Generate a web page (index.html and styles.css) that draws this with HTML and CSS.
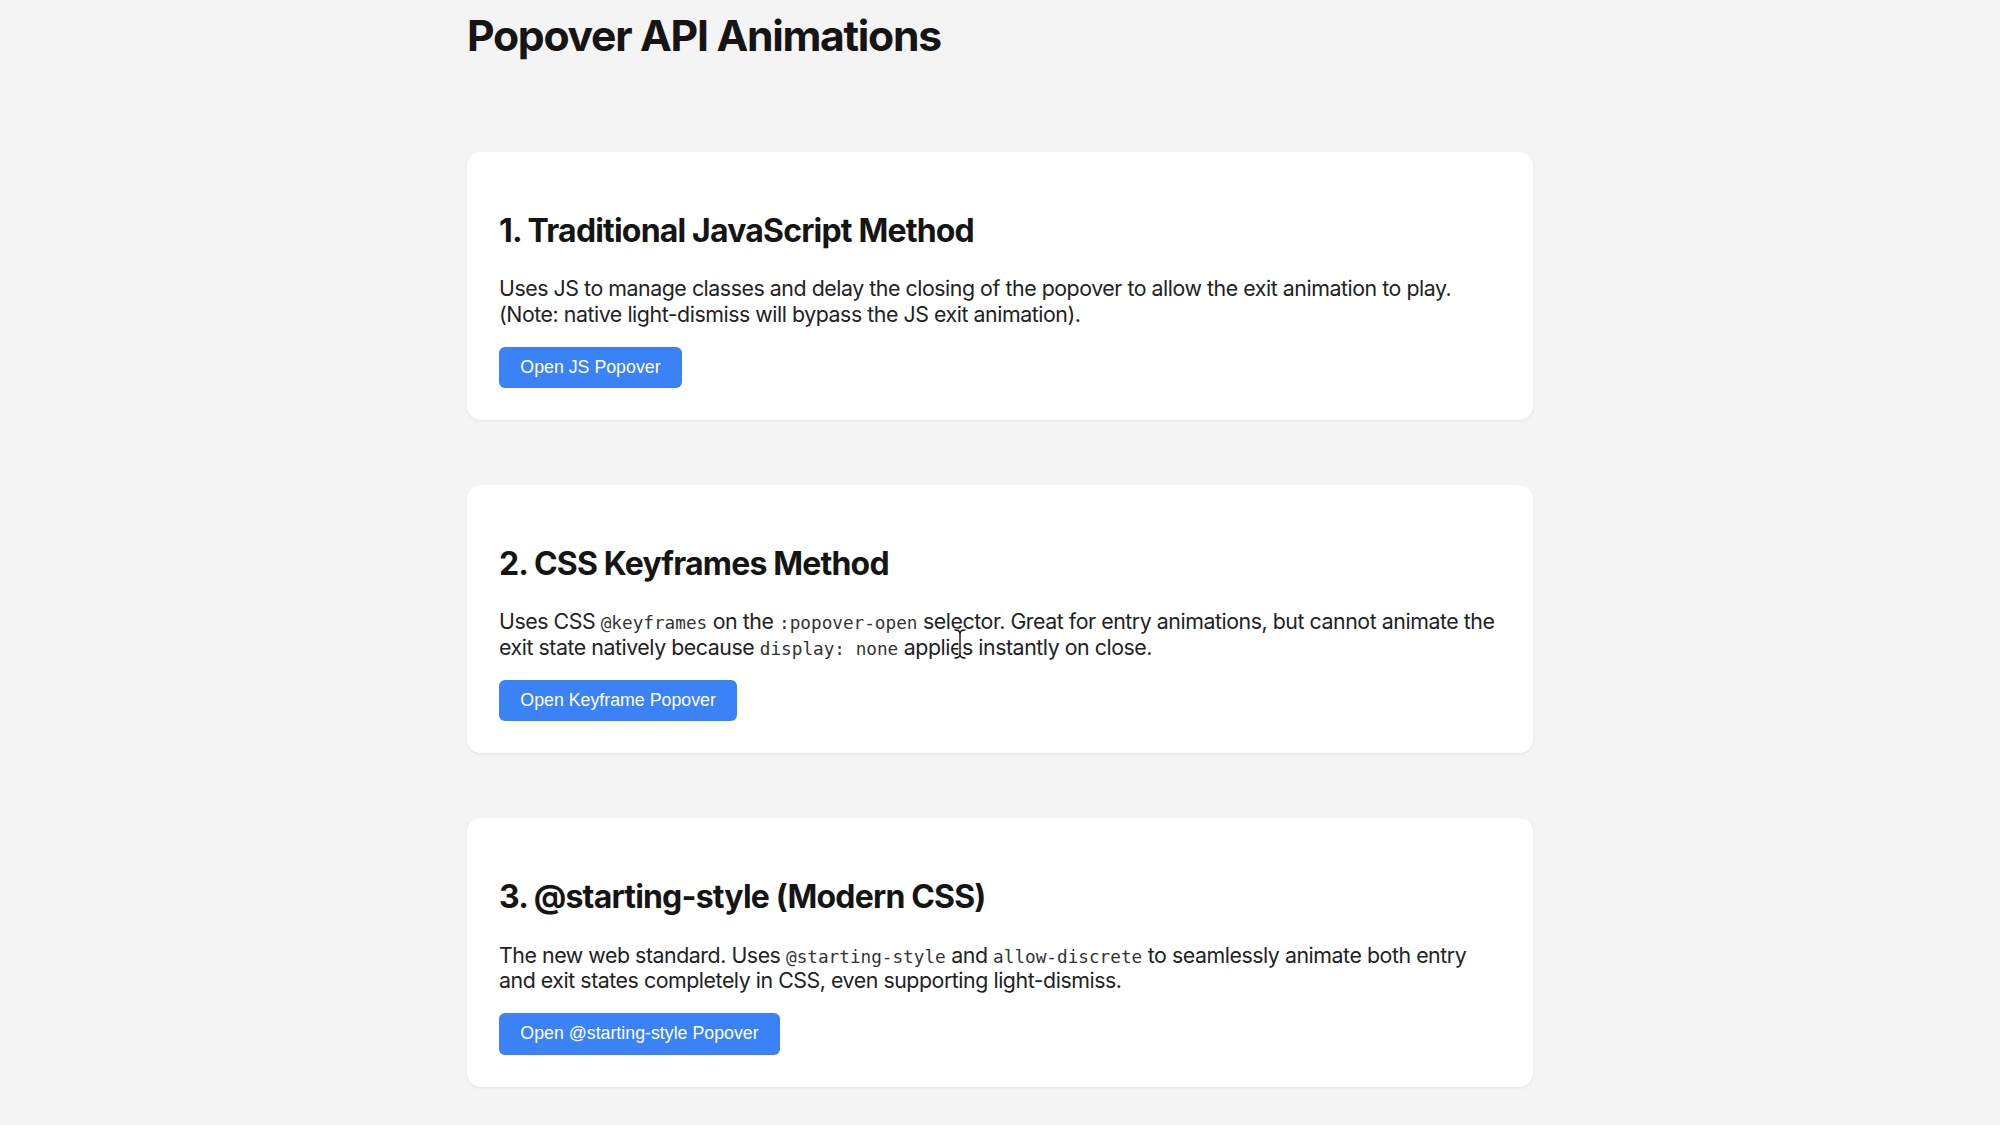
FILE: index.html
```html
<!DOCTYPE html>
<html lang="en">
<head>
<meta charset="utf-8">
<title>Popover API Animations</title>
<link rel="stylesheet" href="styles.css">
</head>
<body>
<main class="page">
  <h1 class="page-title">Popover API Animations</h1>

  <section class="demo-card">
    <h2 class="demo-title">1. Traditional JavaScript Method</h2>
    <p class="demo-text">Uses JS to manage classes and delay the closing of the popover to allow the exit animation to play. (Note: native light-dismiss will bypass the JS exit animation).</p>
    <button class="demo-btn" type="button">Open JS Popover</button>
  </section>

  <section class="demo-card">
    <h2 class="demo-title">2. CSS Keyframes Method</h2>
    <p class="demo-text">Uses CSS <code>@keyframes</code> on the <code>:popover-open</code> selector. Great for entry animations, but cannot animate the exit state natively because <code>display: none</code> applies instantly on close.</p>
    <button class="demo-btn" type="button">Open Keyframe Popover</button>
    <!-- text cursor resting over the paragraph -->
    <svg class="ibeam" width="14" height="32" viewBox="0 0 14 32" aria-hidden="true">
      <path d="M2 2 C5 2 7 3 7 6 L7 26 C7 29 5 30 2 30 M12 2 C9 2 7 3 7 6 M7 26 C7 29 9 30 12 30" fill="none" stroke="#ffffff" stroke-width="3.2" stroke-linecap="round"/>
      <path d="M2 2 C5 2 7 3 7 6 L7 26 C7 29 5 30 2 30 M12 2 C9 2 7 3 7 6 M7 26 C7 29 9 30 12 30" fill="none" stroke="#111111" stroke-width="1.4" stroke-linecap="round"/>
    </svg>
  </section>

  <section class="demo-card">
    <h2 class="demo-title">3. @starting-style (Modern CSS)</h2>
    <p class="demo-text">The new web standard. Uses <code>@starting-style</code> and <code>allow-discrete</code> to seamlessly animate both entry and exit states completely in CSS, even supporting light-dismiss.</p>
    <button class="demo-btn" type="button">Open @starting-style Popover</button>
  </section>
</main>
</body>
</html>
```

FILE: styles.css
```css
* {
  box-sizing: border-box;
}

body {
  margin: 0;
  background: #f4f4f4;
  color: #1f1f1f;
  font-family: Inter, "Noto Sans", sans-serif;
}

.page {
  max-width: 1066px;
  margin: 0 auto;
  padding-top: 10px;
}

.page-title {
  margin: 0 0 91px;
  font-size: 42.67px;
  font-weight: 700;
  letter-spacing: -1.3px;
  color: #151515;
}

.demo-card {
  position: relative;
  background: #ffffff;
  border-radius: 14px;
  padding: 32px;
  margin-bottom: 65px;
  box-shadow: 0 1px 3px rgba(0, 0, 0, 0.07);
}

.demo-title {
  margin: 26.6px 0;
  font-size: 32px;
  font-weight: 700;
  letter-spacing: -0.82px;
  color: #151515;
}

.demo-text {
  margin: 21.33px 0 19.5px;
  font-size: 21.33px;
  line-height: 1.2;
  letter-spacing: -0.45px;
  color: #222222;
}

.demo-text code {
  font-family: "DejaVu Sans Mono", "Liberation Mono", monospace;
  font-size: 17.7px;
  letter-spacing: 0;
  color: #333333;
}

.demo-btn {
  display: inline-block;
  border: 0;
  border-radius: 6px;
  padding: 10px 21.33px;
  background: #3b82f6;
  color: #ffffff;
  font-family: "Liberation Sans", Arial, sans-serif;
  font-size: 17.78px;
  line-height: 1.2;
}

.ibeam {
  position: absolute;
  left: 486px;
  top: 143px;
}
```
